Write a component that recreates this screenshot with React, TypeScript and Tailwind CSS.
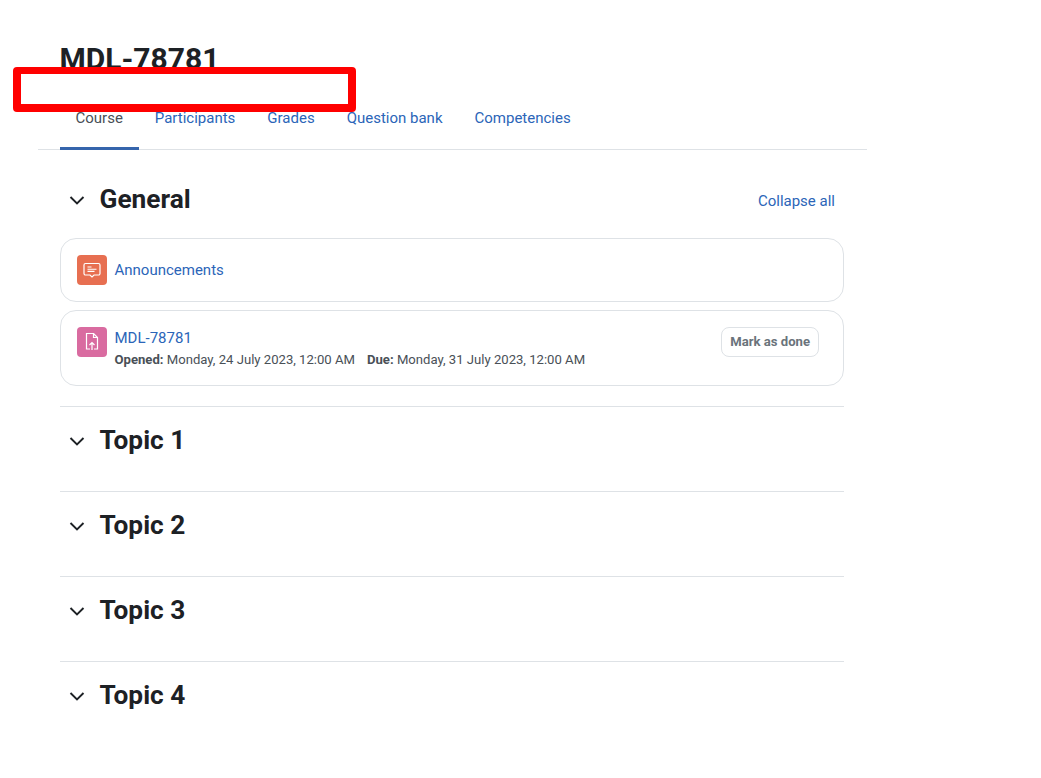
const tabs = ["Participants", "Grades", "Question bank", "Competencies"];
const topics = ["Topic 1", "Topic 2", "Topic 3", "Topic 4"];

function Chevron() {
  return (
    <svg width="18" height="18" viewBox="0 0 18 18" fill="none" stroke="#1d2125" strokeWidth="1.9" className="shrink-0">
      <path d="M2.5 6l6.500 6.500L15.500 6" />
    </svg>
  );
}

function SectionTitle({ title }: { title: string }) {
  return (
    <div className="flex items-center">
      <div className="w-[39.500px] pl-[8px] pt-[2px]">
        <Chevron />
      </div>
      <h3 className="text-[26.25px] leading-[30px] font-bold text-[#1d2125]">{title}</h3>
    </div>
  );
}

function AnnouncementIcon() {
  return (
    <div className="w-[30px] h-[30px] rounded-[4px] bg-[#e76f51] flex items-center justify-center shrink-0">
      <svg width="18" height="18" viewBox="0 0 18 18" fill="none">
        <path d="M2.500 2.500h13A1.500 1.500 0 0 1 17 4v8.500a1.500 1.500 0 0 1-1.500 1.500H11l-2 2-2-2H2.500A1.500 1.500 0 0 1 1 12.500V4a1.500 1.500 0 0 1 1.500-1.500z" stroke="#fff" strokeWidth="1.200" />
        <path d="M4.500 6h4M4.500 8.200h9M4.500 10.400h7" stroke="#fff" strokeWidth="1.100" />
      </svg>
    </div>
  );
}

function AssignIcon() {
  return (
    <div className="w-[30px] h-[30px] rounded-[4px] bg-[#d96ba0] flex items-center justify-center shrink-0">
      <svg width="18" height="18" viewBox="0 0 18 18" fill="none" stroke="#fff" strokeWidth="1.200">
        <path d="M7 16H3.500V0.500h7l4 4V16H11" />
        <path d="M10.500 0.500v4h4" />
        <path d="M9 17V9.500M6.500 12 9 9.500l2.500 2.500" />
      </svg>
    </div>
  );
}

export default function App() {
  return (
    <div className="min-h-[778px] bg-white font-['Roboto',sans-serif] text-[15px] text-[#1d2125] relative overflow-hidden">
      <div className="w-[829px] ml-[38px] pt-[40px]">
        <h1 className="ml-[21.500px] text-[30px] leading-[40px] font-bold -mt-[1px]">MDL-78781</h1>

        <nav className="mt-[18px] h-[53px] flex border-b border-[#dee2e6] pl-[22px] text-[#2b65b8]">
          <div className="w-[79px] pl-[15.500px] pb-[8px] h-[53px] border-b-[3px] border-[#3565ac] text-[#495057] flex items-center -mr-[0.250px]">Course</div>
          {tabs.map((t) => (
            <div key={t} className="px-[16px] pb-[11px] h-[53px] flex items-center">{t}</div>
          ))}
        </nav>

        <div className="ml-[22px] w-[784px]">
          <div className="mt-[34px] flex items-center justify-between">
            <SectionTitle title="General" />
            <span className="mr-[9px] pt-[5px] text-[15px] text-[#2b65b8]">Collapse all</span>
          </div>

          <div className="mt-[24px] h-[64px] border border-[#dee2e6] rounded-[16px] pl-[16px] flex items-center">
            <AnnouncementIcon />
            <span className="ml-[7.500px] text-[#2b65b8]">Announcements</span>
          </div>

          <div className="mt-[8px] h-[76px] border border-[#dee2e6] rounded-[16px] pl-[16px] pr-[24px] pt-[16px] flex">
            <AssignIcon />
            <div className="ml-[7.500px] flex-1">
              <div className="leading-[22px] text-[#2b65b8]">MDL-78781</div>
              <div className="text-[13.125px] leading-[20px] text-[#495057] mt-[1px]">
                <b>Opened:</b> Monday, 24 July 2023, 12:00 AM
                <span className="ml-[12px]"><b>Due:</b> Monday, 31 July 2023, 12:00 AM</span>
              </div>
            </div>
            <div className="h-[30px] px-[8px] border border-[#dee2e6] rounded-[8px] text-[13.125px] font-bold text-[#6a737b] flex items-center">
              Mark as done
            </div>
          </div>

          <div className="mt-[20px]">
            {topics.map((t) => (
              <div key={t} className="h-[85px] border-t border-[#dee2e6] pt-[18px]">
                <SectionTitle title={t} />
              </div>
            ))}
          </div>
        </div>
      </div>

      <div className="absolute left-[13px] top-[67px] w-[343px] h-[45px] border-[8px] border-t-[7px] border-[#ff0000] rounded-[4px] bg-white" />
    </div>
  );
}
